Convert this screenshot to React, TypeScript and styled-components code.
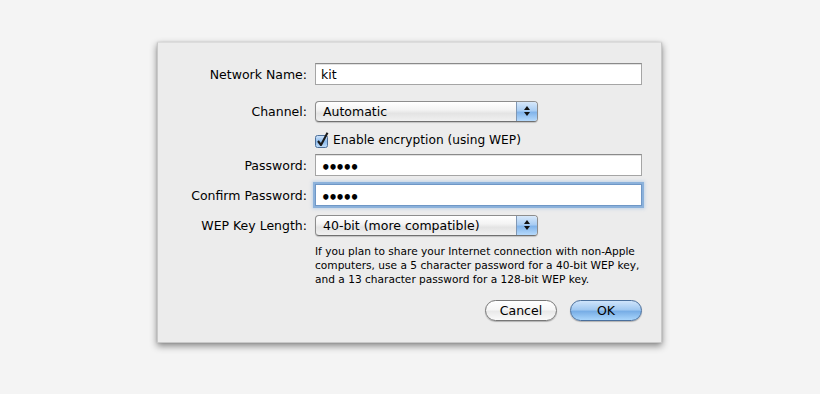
import React from "react";
import styled, { createGlobalStyle } from "styled-components";

const Global = createGlobalStyle`
  html, body { margin: 0; padding: 0; background: #f4f4f4; }
  body { font-family: "DejaVu Sans", "Liberation Sans", sans-serif; }
`;

const Page = styled.div`
  width: 820px;
  height: 394px;
  display: flex;
  align-items: flex-start;
  padding: 42px 0 0 157px;
  box-sizing: border-box;
`;

const Dialog = styled.div`
  width: 505px;
  height: 301px;
  box-sizing: border-box;
  background: #ececec;
  border: 1px solid #c9c9c9;
  border-top-color: #dcdcdc;
  box-shadow: 0 3px 7px rgba(0, 0, 0, 0.45), 0 0 2px rgba(0, 0, 0, 0.12);
  padding: 20px 19px 0 0;
  display: flex;
  flex-direction: column;
`;

const Row = styled.div<{ $top?: number; $h?: number }>`
  display: flex;
  align-items: center;
  margin-top: ${(p) => p.$top ?? 0}px;
  height: ${(p) => p.$h ?? 22}px;
`;

const Label = styled.div`
  width: 149px;
  padding-right: 8px;
  text-align: right;
  font-size: 12.5px;
  color: #000;
  white-space: nowrap;
`;

const Field = styled.div<{ $focus?: boolean }>`
  width: 327px;
  height: 22px;
  box-sizing: border-box;
  background: #fff;
  border: 1px solid ${(p) => (p.$focus ? "#6f97c6" : "#a5a5a5")};
  border-top-color: ${(p) => (p.$focus ? "#6f97c6" : "#8a8a8a")};
  box-shadow: ${(p) =>
    p.$focus
      ? "0 0 0 2px rgba(120, 165, 215, 0.75), 0 0 3px 3px rgba(140, 180, 225, 0.45)"
      : "inset 0 1px 0 #e2e2e2"};
  display: flex;
  align-items: center;
  padding-left: 5px;
  font-size: 12.5px;
  color: #000;
`;

const Dots = styled.span`
  font-size: 15px;
  letter-spacing: -2.4px;
  font-weight: bold;
  line-height: 1;
  padding-top: 6px;
`;

const Popup = styled.div`
  width: 223px;
  height: 21px;
  box-sizing: border-box;
  border: 1px solid #8d8d8d;
  border-bottom-color: #707070;
  border-radius: 4px;
  background: linear-gradient(#ffffff 0%, #f4f4f4 40%, #e4e4e4 60%, #f0f0f0 100%);
  box-shadow: 0 1px 1px rgba(0, 0, 0, 0.18);
  display: flex;
  align-items: stretch;
  overflow: hidden;
`;

const PopupText = styled.div`
  flex: 1;
  padding-left: 7px;
  display: flex;
  align-items: center;
  font-size: 12.5px;
  color: #000;
`;

const PopupArrows = styled.div`
  width: 20px;
  border-left: 1px solid #7f97b4;
  background: linear-gradient(#d7e8fa 0%, #a9cdf3 45%, #82b4ea 55%, #b6dafc 100%);
  display: flex;
  align-items: center;
  justify-content: center;
`;

const CheckText = styled.span`
  font-size: 12.2px;
  color: #000;
  margin-left: 4px;
`;

const Help = styled.div`
  margin-top: 8px;
  margin-left: 157px;
  width: 340px;
  font-size: 10.6px;
  line-height: 14px;
  color: #000;
`;

const Buttons = styled.div`
  display: flex;
  justify-content: flex-end;
  gap: 13px;
  margin-top: 14px;
`;

const Button = styled.div<{ $primary?: boolean }>`
  width: 72px;
  height: 21px;
  box-sizing: border-box;
  border-radius: 11px;
  border: 1px solid ${(p) => (p.$primary ? "#4a6f9c" : "#777")};
  background: ${(p) =>
    p.$primary
      ? "linear-gradient(#cfe4fb 0%, #a2c9f1 45%, #78aee6 55%, #a9d5fb 100%)"
      : "linear-gradient(#ffffff 0%, #f6f6f6 45%, #e9e9e9 55%, #fafafa 100%)"};
  box-shadow: 0 1px 1px rgba(0, 0, 0, 0.25);
  display: flex;
  align-items: center;
  justify-content: center;
  font-size: 12.5px;
  color: #000;
`;

const Arrows = () => (
  <svg width="8" height="12" viewBox="0 0 8 12">
    <path d="M4 1 L7 5 L1 5 Z" fill="#111" />
    <path d="M4 11 L7 7 L1 7 Z" fill="#111" />
  </svg>
);

const Check = () => (
  <svg width="14" height="16" viewBox="0 0 14 16">
    <defs>
      <linearGradient id="cb" x1="0" y1="0" x2="0" y2="1">
        <stop offset="0" stopColor="#d3e6fb" />
        <stop offset="0.5" stopColor="#8dbbec" />
        <stop offset="1" stopColor="#c0ddfa" />
      </linearGradient>
    </defs>
    <rect x="0.5" y="3.5" width="12" height="12" rx="2" fill="url(#cb)" stroke="#4d6f98" />
    <path d="M3 9 L6 13 L12.5 0.8" fill="none" stroke="#1a1a1a" strokeWidth="2.1" strokeLinejoin="round" />
  </svg>
);

const FormRow = ({ label, top, children }: { label: string; top?: number; children: React.ReactNode }) => (
  <Row $top={top}>
    <Label>{label}</Label>
    {children}
  </Row>
);

export default function App() {
  return (
    <>
      <Global />
      <Page>
        <Dialog>
          <FormRow label="Network Name:">
            <Field>kit</Field>
          </FormRow>
          <FormRow label="Channel:" top={15}>
            <Popup>
              <PopupText>Automatic</PopupText>
              <PopupArrows>
                <Arrows />
              </PopupArrows>
            </Popup>
          </FormRow>
          <Row $top={9} $h={18}>
            <Label />
            <Check />
            <CheckText>Enable encryption (using WEP)</CheckText>
          </Row>
          <FormRow label="Password:" top={5}>
            <Field>
              <Dots>•••••</Dots>
            </Field>
          </FormRow>
          <FormRow label="Confirm Password:" top={8}>
            <Field $focus>
              <Dots>•••••</Dots>
            </Field>
          </FormRow>
          <FormRow label="WEP Key Length:" top={8}>
            <Popup>
              <PopupText>40-bit (more compatible)</PopupText>
              <PopupArrows>
                <Arrows />
              </PopupArrows>
            </Popup>
          </FormRow>
          <Help>
            If you plan to share your Internet connection with non-Apple computers, use a 5 character password
            for a 40-bit WEP key, and a 13 character password for a 128-bit WEP key.
          </Help>
          <Buttons>
            <Button>Cancel</Button>
            <Button $primary>OK</Button>
          </Buttons>
        </Dialog>
      </Page>
    </>
  );
}
